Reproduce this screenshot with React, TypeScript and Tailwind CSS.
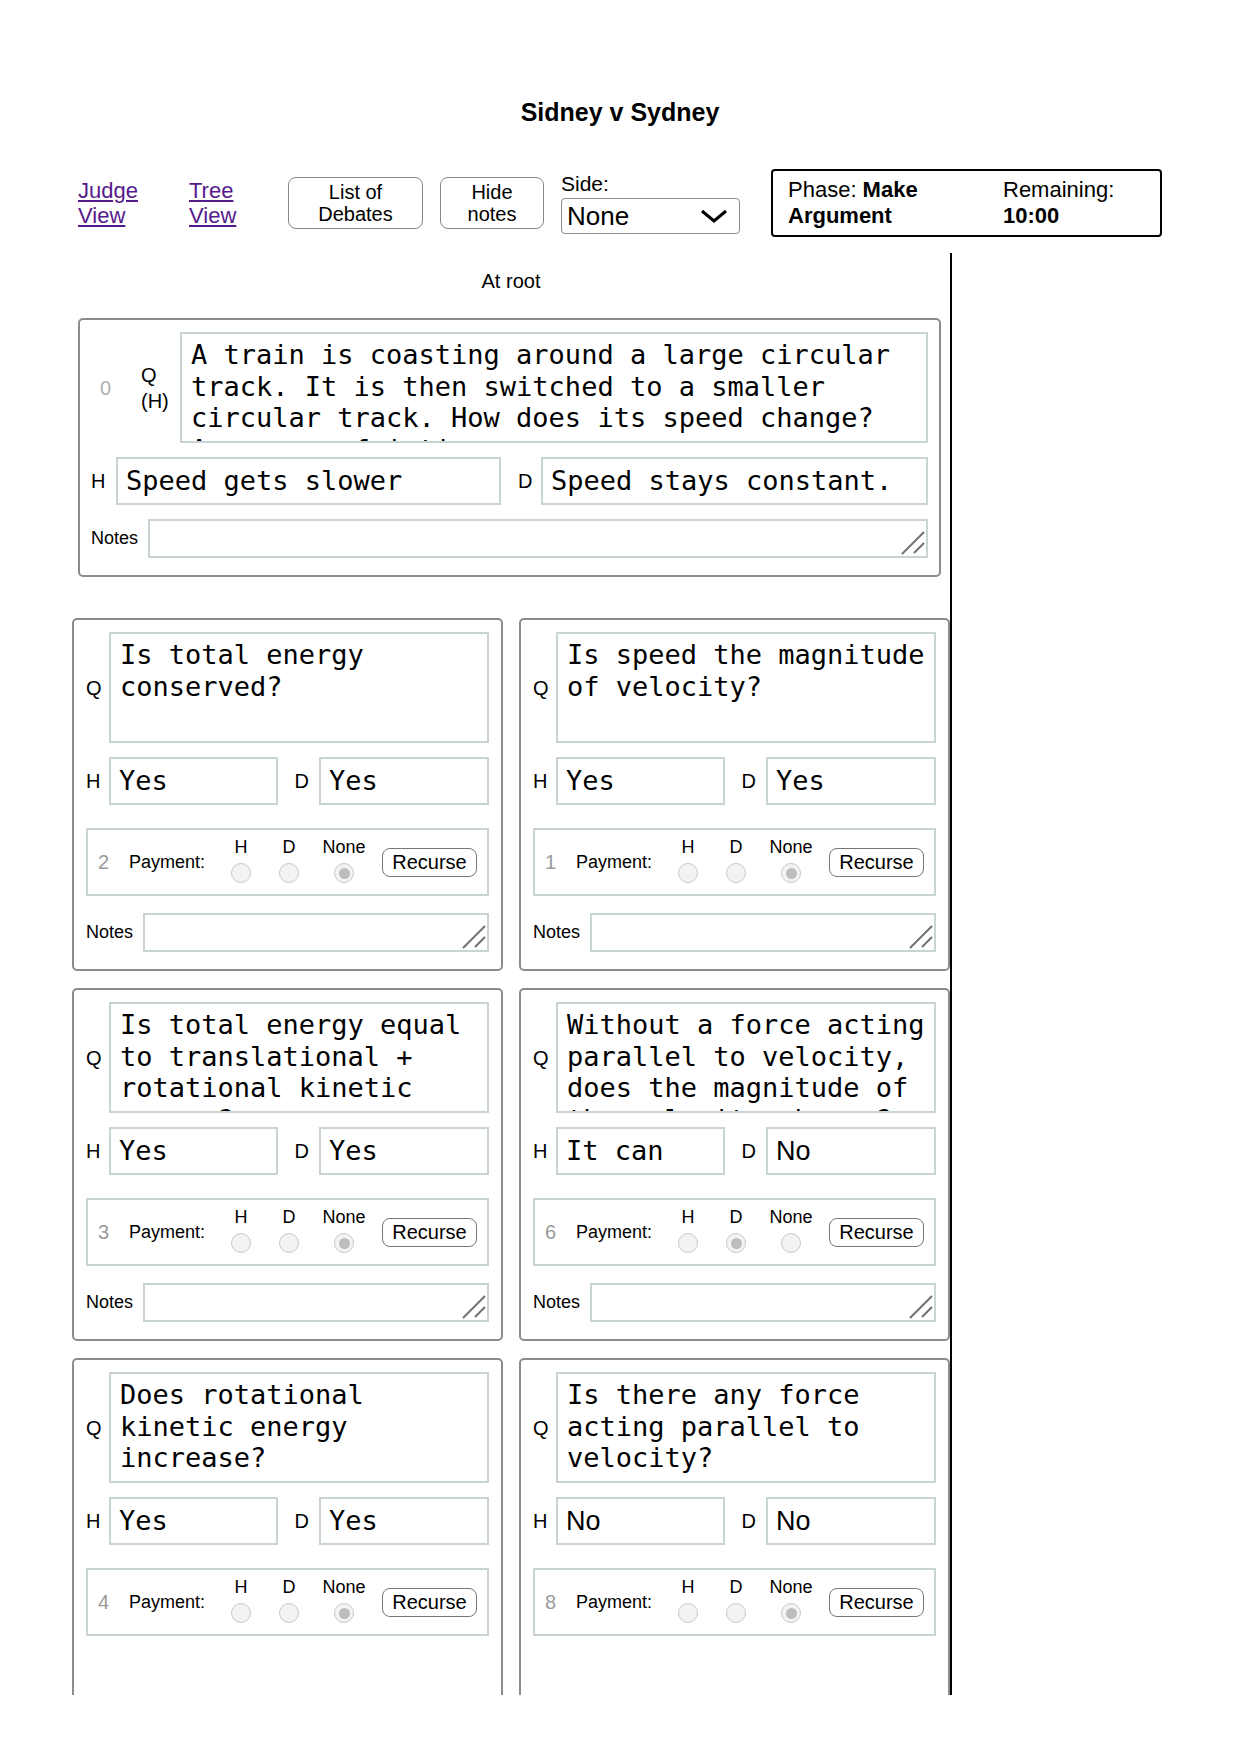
import React from 'react';

type Pick = 'H' | 'D' | 'None';

interface CardData {
  id: number;
  question: string;
  honest: string;
  dishonest: string;
  payment: Pick;
  showNotes?: boolean;
}

const cards: CardData[] = [
  { id: 2, question: 'Is total energy conserved?', honest: 'Yes', dishonest: 'Yes', payment: 'None', showNotes: true },
  { id: 1, question: 'Is speed the magnitude of velocity?', honest: 'Yes', dishonest: 'Yes', payment: 'None', showNotes: true },
  {
    id: 3,
    question: 'Is total energy equal to translational + rotational kinetic energy?',
    honest: 'Yes',
    dishonest: 'Yes',
    payment: 'None',
    showNotes: true,
  },
  {
    id: 6,
    question: 'Without a force acting parallel to velocity, does the magnitude of the velocity change?',
    honest: 'It can',
    dishonest: 'No',
    payment: 'D',
    showNotes: true,
  },
  { id: 4, question: 'Does rotational kinetic energy increase?', honest: 'Yes', dishonest: 'Yes', payment: 'None' },
  {
    id: 8,
    question: 'Is there any force acting parallel to velocity?',
    honest: 'No',
    dishonest: 'No',
    payment: 'None',
  },
];

const Answer = ({ value, className }: { value: string; className: string }) => {
  // some answers come out in the sans face in the original, keep that
  const face = value === 'No' ? "font-['Liberation_Sans',Arial,sans-serif]" : "font-['DejaVu_Sans_Mono',monospace]";
  return (
    <div
      className={`h-[48px] border-2 border-[#c9d4d4] flex items-center pl-[8px] pr-[4px] text-[27px] whitespace-nowrap overflow-hidden ${face} ${className}`}
    >
      {value}
    </div>
  );
};

const Radio = ({ checked }: { checked: boolean }) => (
  <div className="w-[20px] h-[20px] rounded-full border-[1.5px] border-[#c8c8c8] bg-[#f3f3f3] flex items-center justify-center">
    {checked && <div className="w-[11px] h-[11px] rounded-full bg-[#bdbdbd]" />}
  </div>
);

const NotesBox = () => (
  <div className="flex-1 h-[39px] border-2 border-[#c9d4d4] flex items-end justify-end pr-[1px] pb-[1px]">
    <svg width="24" height="24" viewBox="0 0 24 24">
      <line x1="23" y1="1" x2="1" y2="23" stroke="#707070" strokeWidth="2" />
      <line x1="23" y1="12" x2="13" y2="22" stroke="#707070" strokeWidth="2" />
    </svg>
  </div>
);

const NotesRow = ({ className }: { className: string }) => (
  <div className={`flex items-center ${className}`}>
    <div className="w-[57px] text-[18px]">Notes</div>
    <NotesBox />
  </div>
);

const Question = ({ text }: { text: string }) => (
  <div className="flex-1 h-[111px] border-2 border-[#c9d4d4] pl-[9px] pr-[2px] pt-[5px] overflow-hidden font-['DejaVu_Sans_Mono',monospace] text-[27px] leading-[31.5px]">
    {text}
  </div>
);

const PaymentBox = ({ id, payment }: { id: number; payment: Pick }) => (
  <div className="mt-[23px] h-[68px] border-2 border-[#c9d4d4] flex items-center pl-[10px]">
    <div className="w-[31px] text-[20px] text-[#9a9a9a]">{id}</div>
    <div className="w-[88px] text-[18px]">Payment:</div>
    {(['H', 'D', 'None'] as Pick[]).map((p) => (
      <div
        key={p}
        className={`${p === 'None' ? 'w-[62px]' : 'w-[48px]'} flex flex-col items-center mb-[4px]`}
      >
        <span className="text-[18px] leading-[21px]">{p}</span>
        <div className="mt-[5px]">
          <Radio checked={payment === p} />
        </div>
      </div>
    ))}
    <button className="ml-[7px] w-[95px] h-[29px] border-[1.5px] border-[#767676] rounded-[8px] bg-white text-[20px] flex items-center justify-center">
      Recurse
    </button>
  </div>
);

const SubCard = ({ card }: { card: CardData }) => (
  <div className="h-[353px] border-2 border-[#8c8c8c] rounded-[5px] px-[12px] pt-[12px] pb-[17px]">
    <div className="flex items-center">
      <div className="w-[23px] text-[20px]">Q</div>
      <Question text={card.question} />
    </div>
    <div className="flex items-center mt-[14px]">
      <div className="w-[23px] text-[20px]">H</div>
      <Answer value={card.honest} className="w-[169px]" />
      <div className="w-[41px] text-right pr-[10px] text-[20px]">D</div>
      <Answer value={card.dishonest} className="flex-1" />
    </div>
    <PaymentBox id={card.id} payment={card.payment} />
    {card.showNotes && <NotesRow className="mt-[17px]" />}
  </div>
);

const RootCard = () => (
  <div className="ml-[14px] w-[863px] border-2 border-[#8c8c8c] rounded-[5px] pl-[11px] pr-[11px] pt-[12px] pb-[17px]">
    <div className="flex items-center">
      <div className="w-[50px] pl-[9px] text-[20px] text-[#b0b0b0]">0</div>
      <div className="w-[39px] text-[20px] leading-[26px]">
        Q<br />
        (H)
      </div>
      <Question text="A train is coasting around a large circular track. It is then switched to a smaller circular track. How does its speed change? Assume no friction." />
    </div>
    <div className="flex items-center mt-[14px]">
      <div className="w-[25px] text-[20px]">H</div>
      <Answer value="Speed gets slower" className="w-[385px]" />
      <div className="w-[40px] pl-[17px] text-[20px]">D</div>
      <Answer value="Speed stays constant." className="flex-1" />
    </div>
    <NotesRow className="mt-[14px]" />
  </div>
);

export default function App() {
  return (
    <div className="w-[1240px] min-h-[1754px] bg-white text-black font-['Liberation_Sans',Arial,sans-serif] pt-[98px]">
      <h1 className="text-center text-[25px] leading-[29px] font-bold">Sidney v Sydney</h1>

      {/* toolbar */}
      <div className="flex items-center mt-[42px] pl-[78px] h-[68px]">
        <div className="w-[111px]">
          <a href="#" className="block w-[65px] text-[22px] leading-[25px] text-[#551a8b] underline">
            Judge View
          </a>
        </div>
        <div className="w-[99px]">
          <a href="#" className="block w-[65px] text-[22px] leading-[25px] text-[#551a8b] underline">
            Tree View
          </a>
        </div>
        <button className="w-[135px] h-[52px] border-[1.5px] border-[#858585] rounded-[8px] bg-white text-[20px] leading-[22px] flex items-center justify-center text-center">
          List of
          <br />
          Debates
        </button>
        <button className="ml-[17px] w-[104px] h-[52px] border-[1.5px] border-[#858585] rounded-[8px] bg-white text-[20px] leading-[22px] flex items-center justify-center text-center">
          Hide
          <br />
          notes
        </button>
        <div className="ml-[17px] w-[179px]">
          <div className="text-[21px] leading-[22px]">Side:</div>
          <div className="mt-[3px] h-[36px] border border-[#8a8a8a] rounded-[4px] flex items-center justify-between pl-[5px] pr-[11px]">
            <span className="text-[26px] leading-[30px]">None</span>
            <svg width="28" height="14" viewBox="0 0 28 14">
              <polyline points="2,2 14,12 26,2" fill="none" stroke="#000" strokeWidth="3" />
            </svg>
          </div>
        </div>
        <div className="ml-[31px] w-[391px] h-[68px] border-2 border-black rounded-[4px] flex px-[15px] pt-[6px] text-[22px] leading-[26px]">
          <div className="w-[215px] pr-[12px]">
            Phase: <b>Make Argument</b>
          </div>
          <div>
            Remaining:
            <br />
            <b>10:00</b>
          </div>
        </div>
      </div>

      {/* debate tree panel */}
      <div className="mt-[16px] ml-[64px] w-[888px] h-[1442px] overflow-hidden border-r-2 border-black">
        <div className="pt-[17px] pl-[8px] text-center text-[20px] leading-[23px]">At root</div>
        <div className="mt-[25px]">
          <RootCard />
        </div>
        <div className="mt-[41px] pl-[8px] w-[886px] grid grid-cols-2 gap-x-[16px] gap-y-[17px]">
          {cards.map((c) => (
            <SubCard key={c.id} card={c} />
          ))}
        </div>
      </div>
    </div>
  );
}
